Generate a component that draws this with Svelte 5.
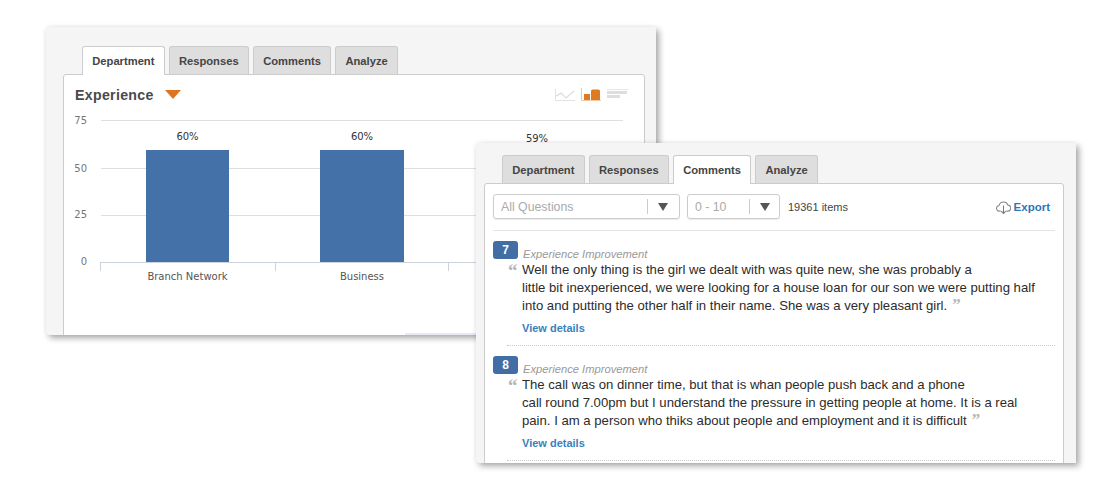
<script>
  const tabs = ["Department", "Responses", "Comments", "Analyze"];

  const comments = [
    {
      num: 7,
      lines: [
        "Well the only thing is the girl we dealt with was quite new, she was probably a",
        "little bit inexperienced, we were looking for a house loan for our son we were putting half",
        "into and putting the other half in their name. She was a very pleasant girl."
      ]
    },
    {
      num: 8,
      lines: [
        "The call was on dinner time, but that is whan people push back and a phone",
        "call round 7.00pm but I understand the pressure in getting people at home. It is a real",
        "pain. I am a person who thiks about people and employment and it is difficult"
      ]
    }
  ];

  const ticks = [
    { label: "75", y: 120, dy: 4 },
    { label: "50", y: 168, dy: 4 },
    { label: "25", y: 215, dy: 3 },
    { label: "0", y: 262, dy: 3 }
  ];

  // chart coordinates are page coordinates minus the svg origin
  const bars = [
    { x: 146, w: 83, top: 150, pct: "60%", name: "Branch Network" },
    { x: 320, w: 84, top: 150, pct: "60%", name: "Business" }
  ];
</script>

<div class="page">
  <section class="window back">
    <div class="tabs">
      {#each tabs as tab, i}
        <div class="tab" class:active={i === 0}>{tab}</div>
      {/each}
    </div>
    <div class="panel">
      <div class="chart-head">
        <h2>Experience</h2>
        <span class="caret"></span>
        <div class="chart-types">
          <svg width="20" height="12" viewBox="0 0 20 12">
            <path d="M0.5 0v11.5H20" fill="none" stroke="#e2e2e2" />
            <path d="M1 7l5-3 5 5 8-7" fill="none" stroke="#dcdcdc" stroke-width="1.2" />
          </svg>
          <svg width="20" height="13" viewBox="0 0 20 13">
            <path d="M0.5 0v12.5H20" fill="none" stroke="#f0c8a4" />
            <path d="M3 6h6v6H3zM10 3a1.5 1.5 0 0 1 1.500-1.500h6A1.500 1.500 0 0 1 19 3v9h-9z" fill="#e07a22" />
          </svg>
          <svg width="21" height="12" viewBox="0 0 21 12">
            <path d="M0 0.5h21" stroke="#e6e6e6" />
            <path d="M0 2h20v3H0zM0 6h13v3H0z" fill="#dedede" />
          </svg>
        </div>
      </div>
      <svg class="chart" width="580" height="200" viewBox="64 105 580 200">
        {#each ticks as t}
          <line class="grid" x1="101" x2="623" y1={t.y + 0.5} y2={t.y + 0.5} />
          <text class="tick" x="87" y={t.y + t.dy} text-anchor="end">{t.label}</text>
        {/each}
        {#each [100, 275, 448] as x}
          <line class="grid dark" x1={x + 0.5} x2={x + 0.5} y1="262" y2="271" />
        {/each}
        <line class="grid dark" x1="100" x2="645" y1="262.5" y2="262.5" />
        {#each bars as b}
          <rect x={b.x} y={b.top} width={b.w} height={262 - b.top} fill="#4472a8" />
          <text class="pct" x={b.x + b.w / 2} y="140" text-anchor="middle">{b.pct}</text>
          <text class="cat" x={b.x + b.w / 2} y="280" text-anchor="middle">{b.name}</text>
        {/each}
        <text class="pct" x="537" y="142" text-anchor="middle">59%</text>
      </svg>
    </div>
  </section>

  <section class="window front">
    <div class="tabs">
      {#each tabs as tab, i}
        <div class="tab" class:active={i === 2}>{tab}</div>
      {/each}
    </div>
    <div class="panel">
      <div class="toolbar">
        <div class="select wide">
          <span class="value">All Questions</span>
          <span class="arrow"></span>
        </div>
        <div class="select narrow">
          <span class="value">0 - 10</span>
          <span class="arrow"></span>
        </div>
        <span class="count">19361 items</span>
        <a class="export" href="#export">
          <svg width="15" height="16" viewBox="0 0 16 16">
            <path d="M5 12.4H3.8a3 3 0 0 1-.5-6A4.9 4.9 0 0 1 12.7 6a3.2 3.2 0 0 1-.4 6.4H11" fill="none" stroke="#888" stroke-width="1.1" />
            <path d="M8 6.5v8.5M5.6 12.4L8 15l2.4-2.6" fill="none" stroke="#777" stroke-width="1.1" />
          </svg>
          Export
        </a>
      </div>
      {#each comments as c}
        <article class="comment">
          <div class="meta">
            <span class="badge">{c.num}</span>
            <em>Experience Improvement</em>
          </div>
          <div class="quote">
            {#each c.lines as line, i}
              <p>
                {line}{#if i === c.lines.length - 1}<span class="close">”</span>{/if}
              </p>
            {/each}
          </div>
          <a class="details" href="#details">View details</a>
        </article>
      {/each}
    </div>
  </section>
</div>

<style>
  :global(body) {
    margin: 0;
    background: #fff;
  }

  .page {
    position: relative;
    width: 1102px;
    height: 495px;
    overflow: hidden;
    font-family: "Liberation Sans", Arial, sans-serif;
  }

  .window {
    position: absolute;
    box-sizing: border-box;
    overflow: hidden;
    background: #f5f5f5;
    border-radius: 3px 0 0 3px;
    box-shadow: 3px 3px 6px rgba(0, 0, 0, 0.35), -1px -1px 4px rgba(0, 0, 0, 0.04);
  }

  .back {
    left: 46px;
    top: 27px;
    width: 610px;
    height: 308px;
    padding: 19px 11px 0 17px;
  }

  /* faint strip left along the bottom edge of the back window */
  .back::after {
    content: "";
    position: absolute;
    left: 359px;
    bottom: 0;
    width: 71px;
    height: 2px;
    background: #e9e9f6;
  }

  .front {
    left: 476px;
    top: 143px;
    width: 600px;
    height: 320px;
    padding: 12px 12px 0 8px;
  }

  .tabs {
    display: flex;
    gap: 4px;
    height: 28px;
    padding-left: 18px;
    position: relative;
    z-index: 1;
  }

  .back .tabs {
    padding-left: 19px;
  }

  .tab {
    box-sizing: border-box;
    height: 28px;
    padding: 0 9.25px;
    line-height: 28px;
    font-size: 11.2px;
    font-weight: bold;
    color: #444;
    background: #dedede;
    border: 1px solid #ccc;
    border-bottom: none;
    border-radius: 3px 3px 0 0;
    white-space: nowrap;
  }

  .tab.active {
    height: 29px;
    background: #fff;
  }

  .panel {
    box-sizing: border-box;
    height: 400px;
    background: #fff;
    border: 1px solid #ccc;
    border-radius: 3px 3px 0 0;
  }

  .chart-head {
    display: flex;
    align-items: center;
    box-sizing: border-box;
    height: 30px;
    padding: 9px 16px 0 11px;
  }

  h2 {
    margin: 0;
    font-size: 14.2px;
    font-weight: bold;
    letter-spacing: 0.3px;
    color: #4a4a4a;
  }

  .caret {
    width: 0;
    height: 0;
    margin: 0 0 0 11px;
    border-left: 8px solid transparent;
    border-right: 8px solid transparent;
    border-top: 9px solid #dd7420;
  }

  .chart-types {
    display: flex;
    align-items: flex-end;
    gap: 6px;
    margin-left: auto;
  }

  .chart {
    display: block;
  }

  .grid {
    stroke: #dfdfdf;
  }

  .grid.dark {
    stroke: #ccd3da;
  }

  .chart text {
    font-family: "DejaVu Sans", sans-serif;
    font-size: 10px;
  }

  .chart .tick {
    fill: #777;
  }

  .chart .pct {
    fill: #333;
  }

  .chart .cat {
    fill: #555;
  }

  .toolbar {
    display: flex;
    align-items: center;
    box-sizing: border-box;
    height: 47px;
    margin: 0 8px;
    padding-bottom: 1px;
    border-bottom: 1px solid #e4e4e4;
  }

  .select {
    display: flex;
    align-items: center;
    box-sizing: border-box;
    height: 25px;
    margin-right: 7px;
    border: 1px solid #ccc;
    border-radius: 3px;
    box-shadow: 0 1px 1px rgba(0, 0, 0, 0.08);
    font-size: 12.3px;
    color: #aaa;
  }

  .select.wide {
    width: 187px;
  }

  .select.narrow {
    width: 93px;
    margin-right: 8px;
  }

  .narrow .arrow {
    width: 29px;
  }

  .value {
    flex: 1;
    padding-left: 7px;
  }

  .arrow {
    position: relative;
    width: 31px;
    height: 15px;
    border-left: 1px solid #ccc;
  }

  .arrow::after {
    content: "";
    position: absolute;
    left: 10px;
    top: 4px;
    border-left: 5px solid transparent;
    border-right: 5px solid transparent;
    border-top: 8px solid #555;
  }

  .count {
    font-size: 11px;
    color: #444;
  }

  .export {
    display: flex;
    align-items: center;
    gap: 3px;
    margin-left: auto;
    margin-right: 5px;
    font-size: 11.5px;
    font-weight: bold;
    color: #2f78b7;
    text-decoration: none;
  }

  .comment {
    position: relative;
    margin: 0 8px;
    padding-top: 10px;
    height: 115px;
    box-sizing: border-box;
  }

  .comment::after {
    content: "";
    position: absolute;
    left: 14px;
    right: 0;
    bottom: 0;
    border-bottom: 1px dotted #ccc;
  }

  .meta {
    display: flex;
    align-items: flex-start;
    height: 20px;
  }

  .badge {
    width: 25px;
    height: 18px;
    margin-right: 5px;
    border-radius: 3px;
    background: #426ea5;
    color: #fff;
    font-size: 12px;
    font-weight: bold;
    line-height: 18px;
    text-align: center;
  }

  em {
    padding-top: 7px;
    font-size: 11.2px;
    line-height: 13px;
    color: #999;
  }

  .quote {
    position: relative;
    padding-left: 29px;
    font-size: 13.15px;
    line-height: 18px;
    color: #2b2b2b;
  }

  .quote::before {
    content: "“";
    position: absolute;
    left: 15px;
    top: 0;
    font-family: "Liberation Serif", serif;
    font-size: 19px;
    font-weight: bold;
    line-height: 19px;
    color: #b5b5b5;
  }

  p {
    margin: 0;
    white-space: nowrap;
  }

  .close {
    margin-left: 5px;
    font-family: "Liberation Serif", serif;
    font-size: 17px;
    line-height: 0;
    font-weight: bold;
    color: #b5b5b5;
  }

  .details {
    display: block;
    margin: 6px 0 0 29px;
    font-size: 11px;
    font-weight: bold;
    line-height: 14px;
    color: #3a7fbe;
    text-decoration: none;
  }
</style>
